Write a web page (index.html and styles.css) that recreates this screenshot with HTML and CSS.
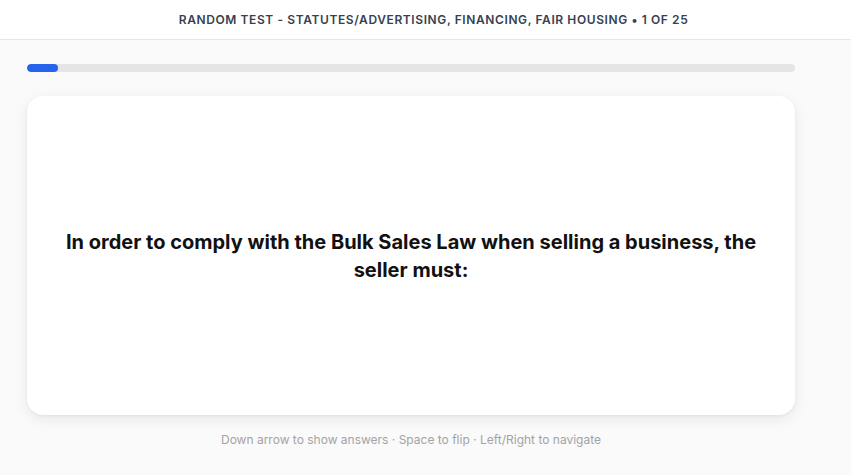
FILE: index.html
```html
<!DOCTYPE html>
<html>
<head>
<meta charset="utf-8">
<link rel="stylesheet" href="styles.css">
</head>
<body>
<header class="topbar">
  <div class="title">Random Test - Statutes/Advertising, Financing, Fair Housing • 1 of 25</div>
</header>
<main class="main">
  <div class="progress"><div class="progress-fill" style="width:4%"></div></div>
  <section class="card">
    <p class="question">In order to comply with the Bulk Sales Law when selling a business, the seller must:</p>
  </section>
  <p class="hint">Down arrow to show answers · Space to flip · Left/Right to navigate</p>
</main>
</body>
</html>
```
FILE: styles.css
```css
* { box-sizing: border-box; }
html, body { margin: 0; padding: 0; }
body {
  background: #fafafa;
  font-family: Inter, "Noto Sans", sans-serif;
  height: 475px;
  overflow: hidden;
}
.topbar {
  height: 40px;
  background: #fff;
  border-bottom: 1px solid #e5e7eb;
  display: flex;
  align-items: center;
  justify-content: center;
  padding-left: 16px;
}
.title {
  font-size: 12px;
  font-weight: 600;
  letter-spacing: 0.05em;
  text-transform: uppercase;
  color: #374151;
}
.main {
  width: 768px;
  margin-left: 27px;
  padding-top: 24px;
}
.progress {
  height: 8px;
  background: #e5e5e5;
  border-radius: 4px;
  overflow: hidden;
}
.progress-fill {
  height: 100%;
  background: #2563eb;
  border-radius: 4px;
}
.card {
  margin-top: 24px;
  height: 319px;
  background: #fff;
  border-radius: 16px;
  box-shadow: 0 4px 14px rgba(0,0,0,0.08), 0 1px 3px rgba(0,0,0,0.05);
  display: flex;
  align-items: center;
  justify-content: center;
  padding: 0 36px;
}
.question {
  margin: 0;
  font-size: 20px;
  font-weight: 700;
  line-height: 28px;
  color: #111111;
  text-align: center;
}
.hint {
  margin: 17px 0 0;
  text-align: center;
  font-size: 12px;
  color: #a3a3a3;
}
```
